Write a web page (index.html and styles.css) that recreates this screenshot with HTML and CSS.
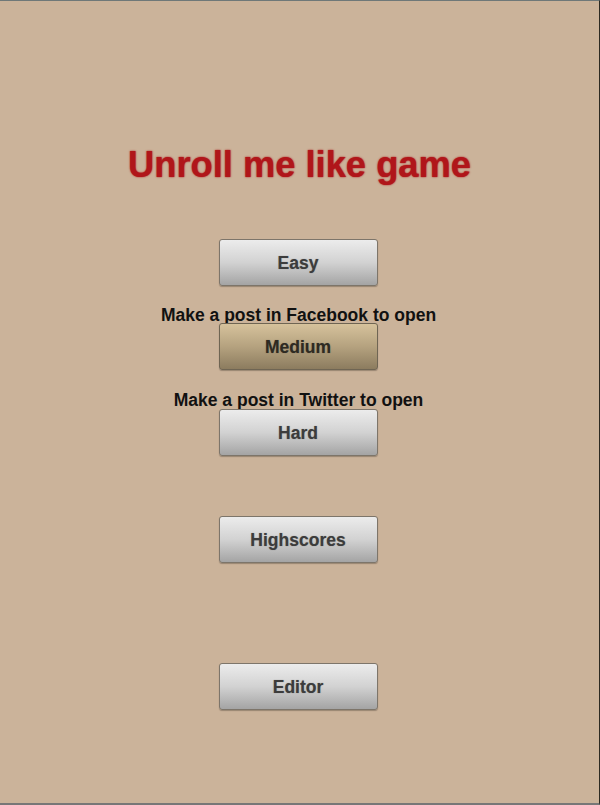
FILE: index.html
```html
<!DOCTYPE html>
<html>
<head>
<meta charset="utf-8">
<link rel="stylesheet" href="styles.css">
</head>
<body>
<div class="screen">
  <h1 class="title">Unroll me like game</h1>
  <button class="btn btn-easy">Easy</button>
  <div class="lock lock-fb">Make a post in Facebook to open</div>
  <button class="btn btn-locked btn-medium">Medium</button>
  <div class="lock lock-tw">Make a post in Twitter to open</div>
  <button class="btn btn-hard">Hard</button>
  <button class="btn btn-scores">Highscores</button>
  <button class="btn btn-editor">Editor</button>
</div>
</body>
</html>
```
FILE: styles.css
```css
html, body {
  margin: 0;
  padding: 0;
}
body {
  width: 600px;
  height: 805px;
  overflow: hidden;
  font-family: "Liberation Sans", Arial, sans-serif;
}
.screen {
  box-sizing: border-box;
  width: 600px;
  height: 805px;
  background: #cbb39a;
  border-top: 1px solid #6f7878;
  border-right: 1px solid #2c2a22;
  border-bottom: 2px solid #777777;
  display: flex;
  flex-direction: column;
  align-items: center;
}
.title {
  margin: 144px 0 0 0;
  font-size: 36.3px;
  line-height: 40px;
  font-weight: bold;
  color: #b0161a;
  text-shadow: 0 0 2px rgba(176, 22, 26, 0.8), 0 0 1px rgba(176, 22, 26, 0.6);
}
.btn {
  box-sizing: border-box;
  width: 159px;
  height: 47px;
  margin: 0 3px 0 0;
  padding: 0;
  border: 1px solid #7d756a;
  border-radius: 3px;
  background: linear-gradient(to bottom, #ececec 0%, #d2d2d2 50%, #a4a4a4 100%);
  box-shadow: 0 1px 1px rgba(60, 50, 40, 0.35);
  font-family: "Liberation Sans", Arial, sans-serif;
  font-size: 17.5px;
  font-weight: bold;
  color: #3c3c3c;
  text-shadow: 0 0 1px rgba(60, 60, 60, 0.5);
  line-height: 46px;
  text-align: center;
  cursor: pointer;
}
.btn-easy {
  margin-top: 54px;
}
.btn-locked {
  background: linear-gradient(to bottom, #d6c29c 0%, #b5a27f 50%, #8c7c5f 100%);
  border-color: #6f6553;
  color: #2e2a22;
}
.btn-medium {
  margin-top: -2px;
}
.btn-hard {
  margin-top: -1px;
}
.btn-scores {
  margin-top: 60px;
}
.btn-editor {
  margin-top: 100px;
}
.lock {
  margin-right: 2px;
  font-size: 17.5px;
  font-weight: bold;
  line-height: 20px;
  color: #111111;
  white-space: nowrap;
}
.lock-fb {
  margin-top: 19px;
}
.lock-tw {
  margin-top: 20px;
}
```
